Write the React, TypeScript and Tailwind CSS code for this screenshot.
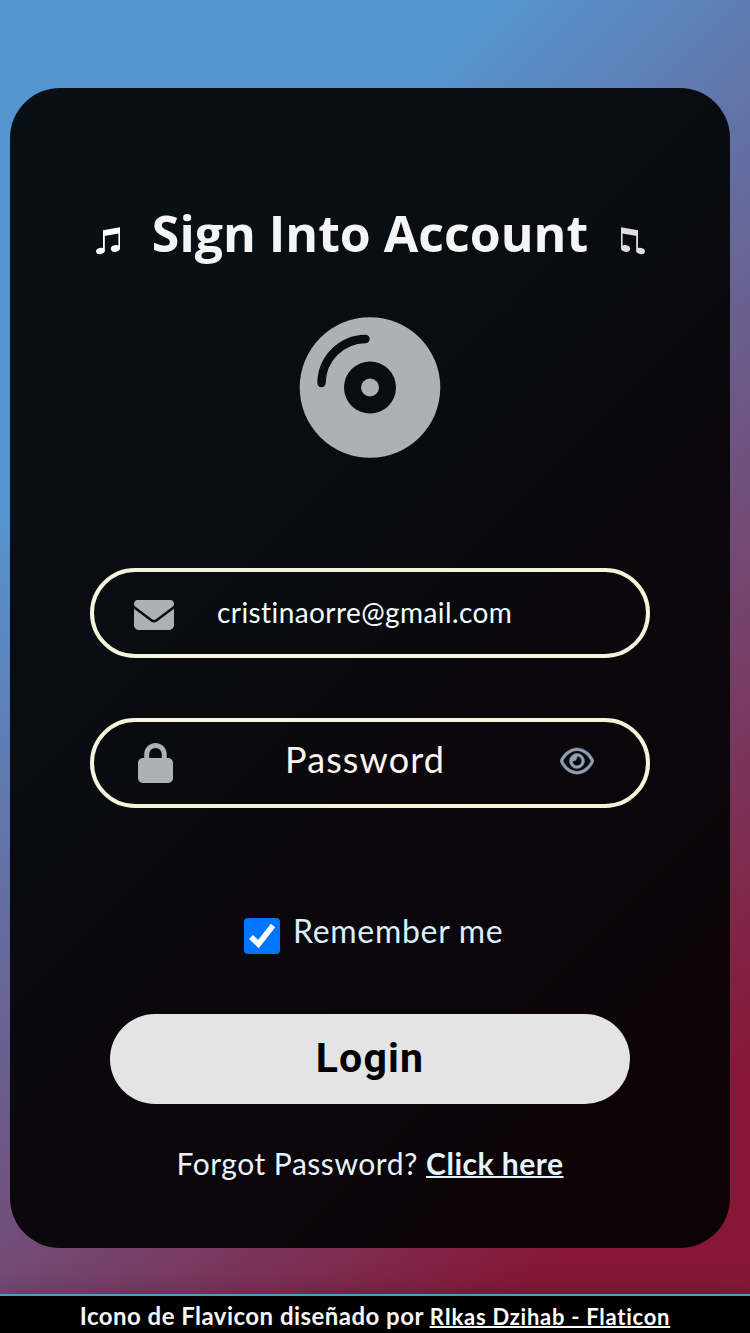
import { FaEnvelope, FaLock, FaRegEye } from "react-icons/fa6";

function Disc() {
  return (
    <svg className="h-[142px] w-[142px]" viewBox="0 0 142 142">
      <mask id="cut">
        <rect width="142" height="142" fill="white" />
        <circle cx="71" cy="71.500" r="26" fill="black" />
        <circle cx="71" cy="71.500" r="9" fill="white" />
        <path d="M22.500 67 A44.500 44.500 0 0 1 66.500 23" fill="none" stroke="black" strokeWidth="8.400" strokeLinecap="round" />
      </mask>
      <circle cx="71" cy="71.500" r="70.300" fill="#adb1b4" mask="url(#cut)" />
    </svg>
  );
}

function Notes({ className }: { className: string }) {
  return (
    <svg className={`mt-[16px] h-[28px] w-[28px] shrink-0 ${className}`} viewBox="0 0 28 28" fill="currentColor">
      <path d="M9 3.200 L26 0.200 V6.200 L9 9.200 Z" />
      <path d="M9 4 H10.800 V24 H9 Z M24.400 2 H26 V21 H24.400 Z" />
      <ellipse cx="6.400" cy="24" rx="4.400" ry="3.100" transform="rotate(-12 6.400 24)" />
      <ellipse cx="21.400" cy="21.500" rx="4.600" ry="3.300" transform="rotate(-12 21.400 21.500)" />
    </svg>
  );
}

export default function App() {
  return (
    <div className="flex h-[1333px] w-[750px] flex-col overflow-hidden bg-[linear-gradient(135deg,#5595d0_24%,#861737_87%)] font-['Lato',sans-serif] [font-variant-ligatures:none]">
      <main className="mt-[88px] ml-[10px] flex h-[1160px] w-[720px] shrink-0 flex-col items-center rounded-[50px] bg-black/90">
        <h1 className="mt-[109px] flex h-[72px] items-center whitespace-nowrap font-['Open_Sans',sans-serif] text-[50px] leading-[72px] font-bold text-[#f5f5f5]">
          <Notes className="-ml-px text-white" />
          <span className="mr-[31px] ml-[30px]">Sign Into Account</span>
          <Notes className="-mr-[2px] -scale-x-100 opacity-90" />
        </h1>
        <div className="mt-[47px]">
          <Disc />
        </div>
        <div className="mt-[110px] flex h-[90px] w-[560px] items-center rounded-full border-4 border-[#f5f5dc]">
          <FaEnvelope className="mt-[4px] ml-[40px] h-[40px] w-[40px] text-[#adb1b4]" />
          <span className="mb-[2px] ml-[43px] whitespace-nowrap text-[28px] leading-[40px] tracking-[0.42px] text-[#f0ffff]">cristinaorre@gmail.com</span>
        </div>
        <div className="mt-[60px] flex h-[90px] w-[560px] items-center rounded-full border-4 border-[#f5f5dc]">
          <FaLock className="ml-[44px] h-[40px] w-[35px] text-[#adb1b4]" />
          <span className="mb-[8px] ml-[112px] w-[161px] whitespace-nowrap text-[36px] leading-[40px] tracking-[1.1px] text-[#fff5ee]">Password</span>
          <FaRegEye className="mb-[4px] ml-[114px] h-[30px] w-[34px] text-[#8fa0b5]" stroke="currentColor" strokeWidth="8" />
        </div>
        <label className="mt-[100px] flex h-[56px] items-center self-start pl-[234px]">
          <span className="flex h-[36px] w-[36px] items-center justify-center rounded-[4px] bg-[#0075ff]">
            <svg viewBox="0 0 36 36" className="h-[36px] w-[36px]">
              <path d="M7 19 L14.500 26 L29 7.500" fill="none" stroke="white" strokeWidth="5.600" />
            </svg>
          </span>
          <span className="mb-[10px] ml-[13px] whitespace-nowrap text-[32px] leading-[40px] tracking-[0.7px] text-[#d9effc]">Remember me</span>
        </label>
        <button className="mt-[50px] h-[90px] w-[520px] shrink-0 rounded-full bg-[#e4e4e4] pb-[2px] font-['Roboto',sans-serif] text-[41px] leading-[88px] font-bold tracking-[1.2px] text-black">
          Login
        </button>
        <p className="mt-[39px] whitespace-nowrap text-[30px] leading-[40px] tracking-[0.52px] text-[#e6f4fc]">
          Forgot Password? <a className="font-bold tracking-[0.5px] underline decoration-2">Click here</a>
        </p>
      </main>
      <footer className="mt-[46px] h-[39px] shrink-0 whitespace-nowrap border-t-2 border-[#5595d0] bg-black text-center text-[24px] leading-[39px] font-bold tracking-[0.46px] text-[#f5f5f5] shadow-[0_0_30px_rgba(0,0,0,0.2)]">
        Icono de Flavicon diseñado por <a className="text-[22px] tracking-[0.74px] text-white underline decoration-2">RIkas Dzihab - Flaticon</a>
      </footer>
    </div>
  );
}
